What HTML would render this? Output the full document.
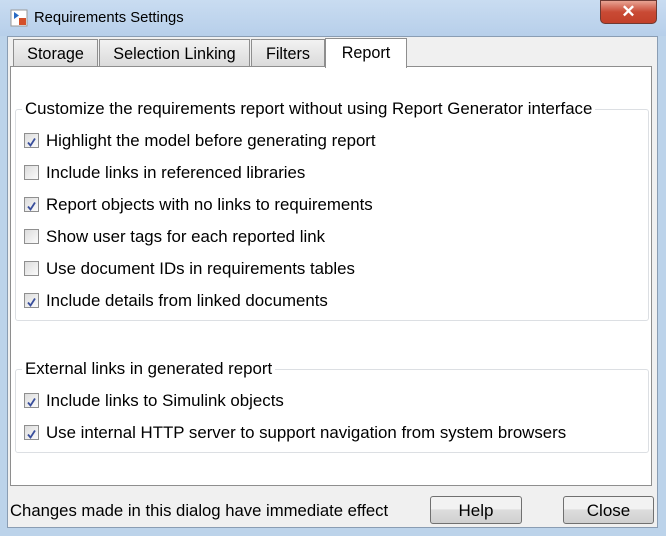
<!DOCTYPE html>
<html><head><style>
*{margin:0;padding:0;box-sizing:border-box}
body{width:666px;height:536px;overflow:hidden;background:#bcd3ea;font-family:"Liberation Sans",sans-serif;font-size:16px;color:#000;position:relative}
.abs{position:absolute}
.title{left:0;top:0;width:666px;height:36px;background:linear-gradient(#c9dcf1,#b7cfea)}
.client{left:7px;top:36px;width:651px;height:492px;background:#f0f0f0;border:1px solid #8a9db3}
.tab{top:39px;height:28px;background:linear-gradient(#f2f2f2,#dadada);border:1px solid #8e8e8e;border-bottom:none;text-align:center;line-height:29px;font-size:16.2px}
.panel{left:10px;top:66px;width:642px;height:420px;background:#fff;border:1px solid #8e8e8e}
.grp{border:1px solid #dcdfe3;border-radius:3px}
.lbl{background:#fff;padding:0 3px;font-size:16.85px;white-space:nowrap}
.cb{left:24px;width:15px;height:15px;border:1px solid #8f8f8f;background:linear-gradient(135deg,#dcdcdc,#fbfbfb);padding:1px}
.t{left:46px;font-size:16.85px;white-space:nowrap}
.btn{top:496px;height:28px;border:1px solid #707070;border-radius:3px;background:linear-gradient(#f2f2f2 45%,#dddddd 50%,#cfcfcf);text-align:center;line-height:27px;font-size:17px}
</style></head><body>
<div class="abs title"></div>
<div class="abs" style="left:600px;top:0;width:57px;height:24px;border-radius:0 0 5px 5px;background:linear-gradient(#e8a393,#c94a35 50%,#c2402a);border:1px solid #6e3a33;color:#fff;text-align:center;font-weight:bold;font-size:17px;line-height:22px">✕</div>
<svg class="abs" style="left:10px;top:9px" width="18" height="18"><rect x="1" y="1" width="16" height="16" fill="#fff" stroke="#999"/><path d="M4 3v7l5-3.5z" fill="#2a6bc4"/><rect x="9" y="9" width="7" height="7" fill="#d4502a"/></svg>
<div class="abs" style="left:34px;top:10px;font-size:14.8px">Requirements Settings</div>
<div class="abs client"></div>
<div class="abs tab" style="left:13px;width:85px">Storage</div>
<div class="abs tab" style="left:99px;width:151px">Selection Linking</div>
<div class="abs tab" style="left:251px;width:74px">Filters</div>
<div class="abs panel"></div>
<div class="abs tab" style="left:325px;top:38px;height:30px;width:82px;background:#fff;z-index:2">Report</div>
<div class="abs grp" style="left:15px;top:109px;width:634px;height:212px"></div>
<div class="abs lbl" style="left:22px;top:99px">Customize the requirements report without using Report Generator interface</div>
<div class="abs grp" style="left:15px;top:369px;width:634px;height:84px"></div>
<div class="abs lbl" style="left:22px;top:359px">External links in generated report</div>

<div class="abs cb" style="top:133px"><svg width="11" height="11"><path d="M2 5.5l2.5 3L9 1.5" stroke="#3a4f9c" stroke-width="1.8" fill="none"/></svg></div>
<div class="abs t" style="top:131px">Highlight the model before generating report</div>
<div class="abs cb" style="top:165px"></div>
<div class="abs t" style="top:163px">Include links in referenced libraries</div>
<div class="abs cb" style="top:197px"><svg width="11" height="11"><path d="M2 5.5l2.5 3L9 1.5" stroke="#3a4f9c" stroke-width="1.8" fill="none"/></svg></div>
<div class="abs t" style="top:195px">Report objects with no links to requirements</div>
<div class="abs cb" style="top:229px"></div>
<div class="abs t" style="top:227px">Show user tags for each reported link</div>
<div class="abs cb" style="top:261px"></div>
<div class="abs t" style="top:259px">Use document IDs in requirements tables</div>
<div class="abs cb" style="top:293px"><svg width="11" height="11"><path d="M2 5.5l2.5 3L9 1.5" stroke="#3a4f9c" stroke-width="1.8" fill="none"/></svg></div>
<div class="abs t" style="top:291px">Include details from linked documents</div>
<div class="abs cb" style="top:393px"><svg width="11" height="11"><path d="M2 5.5l2.5 3L9 1.5" stroke="#3a4f9c" stroke-width="1.8" fill="none"/></svg></div>
<div class="abs t" style="top:391px">Include links to Simulink objects</div>
<div class="abs cb" style="top:425px"><svg width="11" height="11"><path d="M2 5.5l2.5 3L9 1.5" stroke="#3a4f9c" stroke-width="1.8" fill="none"/></svg></div>
<div class="abs t" style="top:423px">Use internal HTTP server to support navigation from system browsers</div>

<div class="abs" style="left:10px;top:501px;font-size:16.7px;white-space:nowrap">Changes made in this dialog have immediate effect</div>
<div class="abs btn" style="left:430px;width:92px">Help</div>
<div class="abs btn" style="left:563px;width:91px">Close</div>
</body></html>
